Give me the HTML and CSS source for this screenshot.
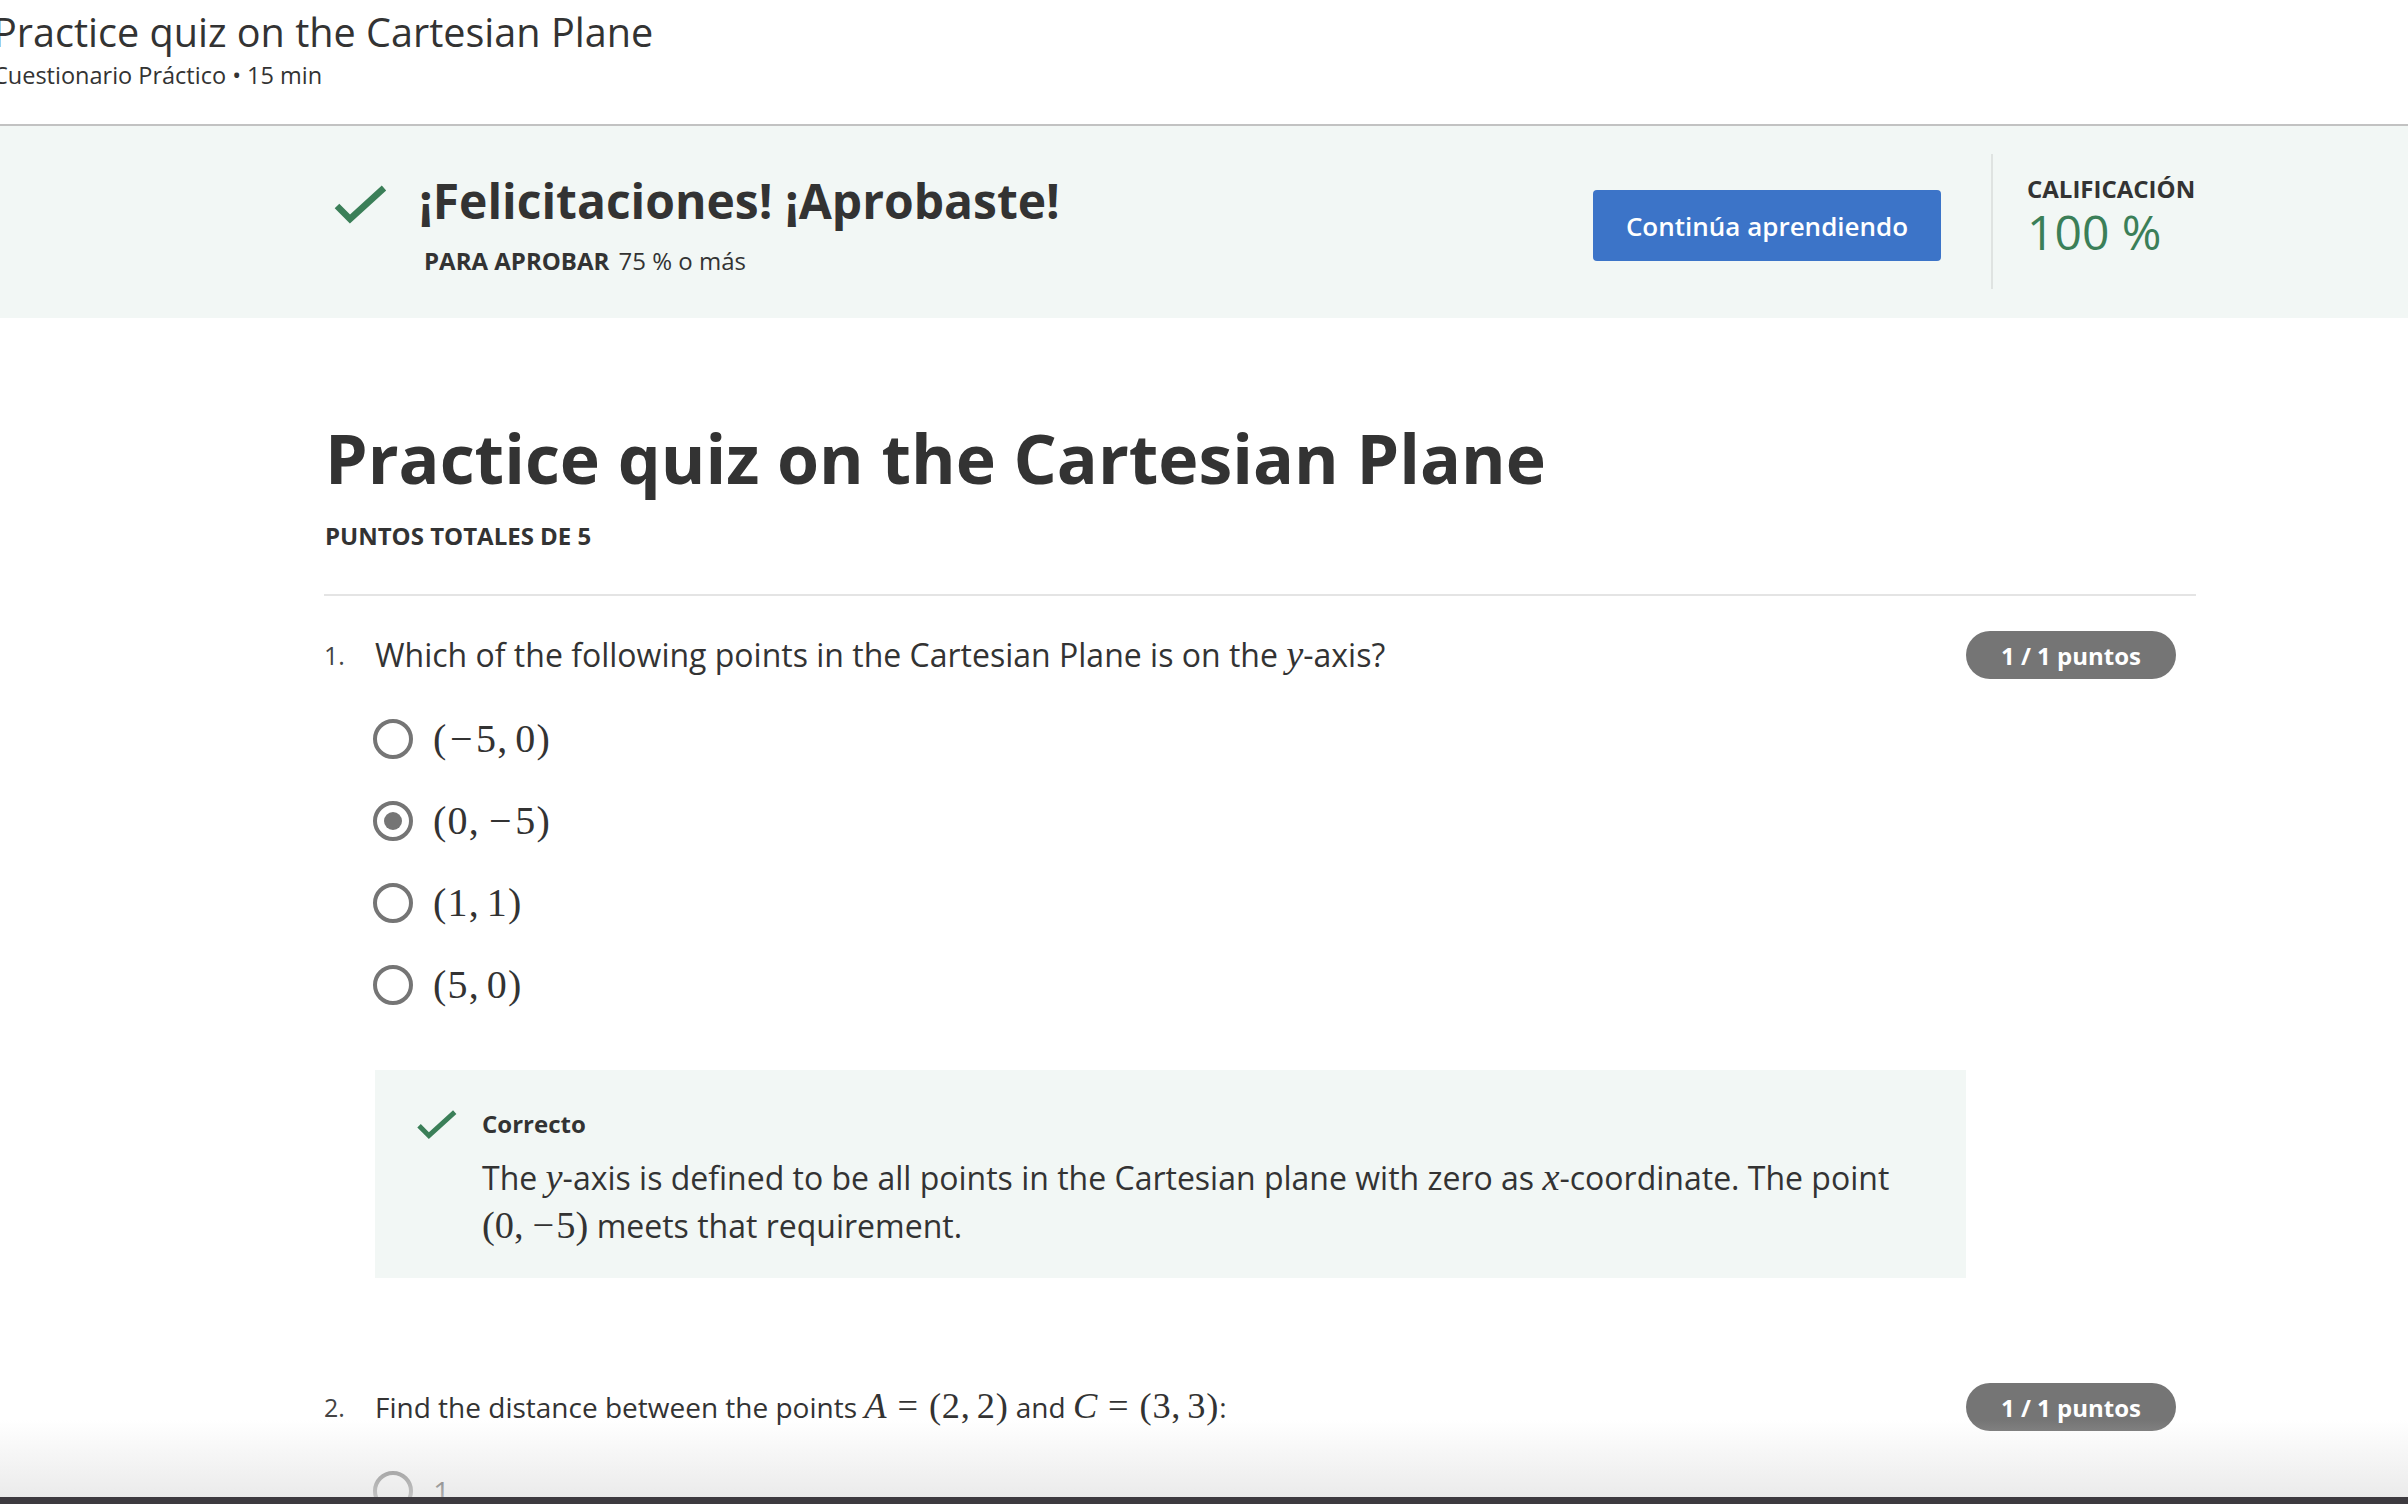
FILE: index.html
```html
<!DOCTYPE html>
<html lang="es">
<head>
<meta charset="utf-8">
<title>Practice quiz on the Cartesian Plane</title>
<link rel="stylesheet" href="styles.css">
</head>
<body>
<div class="page">
  <header class="topbar">
    <div class="topbar-text">
      <div class="topbar-title">Practice quiz on the Cartesian Plane</div>
      <div class="topbar-sub">Cuestionario Práctico • 15 min</div>
    </div>
  </header>

  <section class="banner">
    <div class="banner-inner">
      <svg class="banner-check" viewBox="0 0 54 42" aria-hidden="true">
        <polyline points="4,22 17,35 51,4" fill="none" stroke="#3b7f58" stroke-width="6.5" stroke-linecap="butt" stroke-linejoin="miter"/>
      </svg>
      <div class="banner-text">
        <h2 class="banner-title">¡Felicitaciones! ¡Aprobaste!</h2>
        <div class="pass"><span class="pass-label">PARA APROBAR</span> 75 % o más</div>
      </div>
      <button class="btn">Continúa aprendiendo</button>
      <div class="vdiv"></div>
      <div class="grade">
        <div class="grade-label">CALIFICACIÓN</div>
        <div class="grade-value">100 %</div>
      </div>
    </div>
  </section>

  <main class="content">
    <h1 class="quiz-title">Practice quiz on the Cartesian Plane</h1>
    <div class="total">PUNTOS TOTALES DE 5</div>
    <div class="rule"></div>

    <div class="question">
      <div class="qnum">1.</div>
      <div class="qbody">
        <div class="qtext">Which of the following points in the Cartesian Plane is on the <span class="math"><i>y</i></span>-axis?</div>
        <div class="options">
          <div class="option"><span class="radio"></span><span class="math opt">(<span class="minus">−</span>5,<span class="thin"></span>0)</span></div>
          <div class="option"><span class="radio checked"></span><span class="math opt">(0,<span class="thin"></span><span class="minus">−</span>5)</span></div>
          <div class="option"><span class="radio"></span><span class="math opt">(1,<span class="thin"></span>1)</span></div>
          <div class="option"><span class="radio"></span><span class="math opt">(5,<span class="thin"></span>0)</span></div>
        </div>
        <div class="feedback">
          <svg class="fb-check" viewBox="0 0 54 42" aria-hidden="true">
            <polyline points="4,22 17,35 51,4" fill="none" stroke="#3b7f58" stroke-width="6.5"/>
          </svg>
          <div class="fb-body">
            <div class="fb-title">Correcto</div>
            <div class="fb-text">The <span class="math"><i>y</i></span>-axis is defined to be all points in the Cartesian plane with zero as <span class="math"><i>x</i></span>-coordinate. The point <span class="math">(0,<span class="thin"></span><span class="minus">−</span>5)</span> meets that requirement.</div>
          </div>
        </div>
      </div>
      <div class="badge">1 / 1 puntos</div>
    </div>

    <div class="question q2">
      <div class="qnum">2.</div>
      <div class="qbody">
        <div class="qtext small">Find the distance between the points <span class="math"><i>A</i><span class="rel">=</span>(2,<span class="thin"></span>2)</span> and <span class="math"><i>C</i><span class="rel">=</span>(3,<span class="thin"></span>3)</span>:</div>
        <div class="options">
          <div class="option"><span class="radio"></span><span class="opt-plain">1</span></div>
          <div class="option"><span class="radio"></span><span class="opt-plain">2</span></div>
        </div>
      </div>
      <div class="badge">1 / 1 puntos</div>
    </div>
  </main>

  <div class="fade"></div>
</div>
</body>
</html>
```

FILE: styles.css
```css
html, body {
  margin: 0;
  padding: 0;
}

body {
  font-family: "Open Sans", "Liberation Sans", sans-serif;
  color: #333333;
  background: #ffffff;
}

.page {
  position: relative;
  height: 100vh;
  overflow: hidden;
}

/* top bar */
.topbar {
  height: 124px;
  border-bottom: 2px solid #c2c2c2;
}

.topbar-text {
  margin-left: -7px;
  padding-top: 4px;
}

.topbar-title {
  font-size: 39.6px;
  line-height: 56px;
  font-weight: 400;
  color: #333;
}

.topbar-sub {
  font-size: 23.5px;
  line-height: 30px;
  color: #333;
}

/* banner */
.banner {
  background: #f2f7f5;
  height: 192px;
}

.banner-inner {
  display: flex;
  align-items: flex-start;
  margin-left: 324px;
  width: 1872px;
  height: 100%;
}

.banner-check {
  flex: none;
  width: 54px;
  height: 42px;
  margin: 58px 0 0 9px;
}

.banner-text {
  margin: 47px 0 0 32px;
}

.banner-title {
  margin: 0;
  font-size: 48px;
  line-height: 56px;
  font-weight: 700;
  color: #333;
}

.pass {
  margin-top: 17px;
  padding-left: 5px;
  font-size: 24px;
  line-height: 30px;
}

.pass-label {
  font-weight: 700;
  margin-right: 3px;
}

.btn {
  flex: none;
  margin: 64px 0 0 auto;
  width: 348px;
  height: 71px;
  border: 0;
  border-radius: 4px;
  background: #3c74c8;
  color: #ffffff;
  font-family: "Open Sans", sans-serif;
  font-size: 26px;
  font-weight: 600;
}

.vdiv {
  flex: none;
  width: 2px;
  height: 135px;
  margin: 28px 34px 0 50px;
  background: #dfe3e1;
}

.grade {
  flex: none;
  width: 169px;
  margin-top: 48px;
}

.grade-label {
  font-size: 24px;
  line-height: 30px;
  font-weight: 700;
  white-space: nowrap;
}

.grade-value {
  font-size: 48px;
  line-height: 56px;
  font-weight: 400;
  color: #3b7f58;
}

/* content */
.content {
  margin-left: 324px;
  width: 1872px;
}

.quiz-title {
  margin: 100px 0 0 1px;
  font-size: 68px;
  line-height: 79px;
  font-weight: 700;
  color: #333;
}

.total {
  margin: 24px 0 0 1px;
  font-size: 24px;
  line-height: 30px;
  font-weight: 700;
}

.rule {
  margin-top: 43px;
  height: 2px;
  background: #e4e4e4;
}

.question {
  display: grid;
  grid-template-columns: 51px 1fr 210px;
  margin: 35px 20px 0 0;
}

.q2 {
  margin-top: 105px;
}

.qnum {
  font-size: 25px;
  line-height: 48px;
  color: #444;
}

.qtext {
  font-size: 32px;
  line-height: 48px;
}

.qtext.small {
  font-size: 28px;
}

.math {
  font-family: "Liberation Serif", "DejaVu Serif", serif;
  font-size: 1.2em;
  line-height: 1;
  white-space: nowrap;
}

.qtext.small .math {
  font-size: 1.3em;
  letter-spacing: 0.02em;
}

.math i {
  font-style: italic;
}

.thin {
  display: inline-block;
  width: 0.17em;
}

.minus {
  display: inline-block;
  padding: 0 0.06em;
}

.rel {
  margin: 0 0.28em;
}

.options {
  margin-top: 19px;
}

.option {
  display: flex;
  align-items: center;
  gap: 20px;
  height: 82px;
  margin-left: -2px;
}

.radio {
  flex: none;
  position: relative;
  width: 40px;
  height: 40px;
  box-sizing: border-box;
  border: 4px solid #757575;
  border-radius: 50%;
  background: #fff;
}

.radio.checked::after {
  content: "";
  position: absolute;
  left: 7px;
  top: 7px;
  width: 18px;
  height: 18px;
  border-radius: 50%;
  background: #757575;
}

.opt {
  font-size: 40px;
  letter-spacing: 0.03em;
  color: #333;
}

.opt-plain {
  font-family: "Open Sans", sans-serif;
  font-size: 30px;
}

.feedback {
  margin-top: 44px;
  background: #f2f7f5;
  padding: 39px 40px 28px 41px;
  display: grid;
  grid-template-columns: 41px 1fr;
  column-gap: 25px;
}

.fb-check {
  width: 41px;
  height: 32px;
}

.fb-title {
  font-size: 24px;
  line-height: 30px;
  font-weight: 700;
}

.fb-text {
  margin-top: 15px;
  font-size: 32px;
  line-height: 48px;
}

.badge {
  align-self: start;
  height: 48px;
  border-radius: 24px;
  background: #757575;
  color: #ffffff;
  font-size: 24px;
  font-weight: 700;
  display: flex;
  align-items: center;
  justify-content: center;
}

/* bottom overlay */
.fade {
  position: absolute;
  left: 0;
  right: 0;
  bottom: 0;
  height: 84px;
  background: linear-gradient(to bottom, rgba(255,255,255,0) 0%, rgba(226,226,226,0.7) 100%);
  border-bottom: 7px solid #3d3a3f;
  box-sizing: border-box;
}
```
